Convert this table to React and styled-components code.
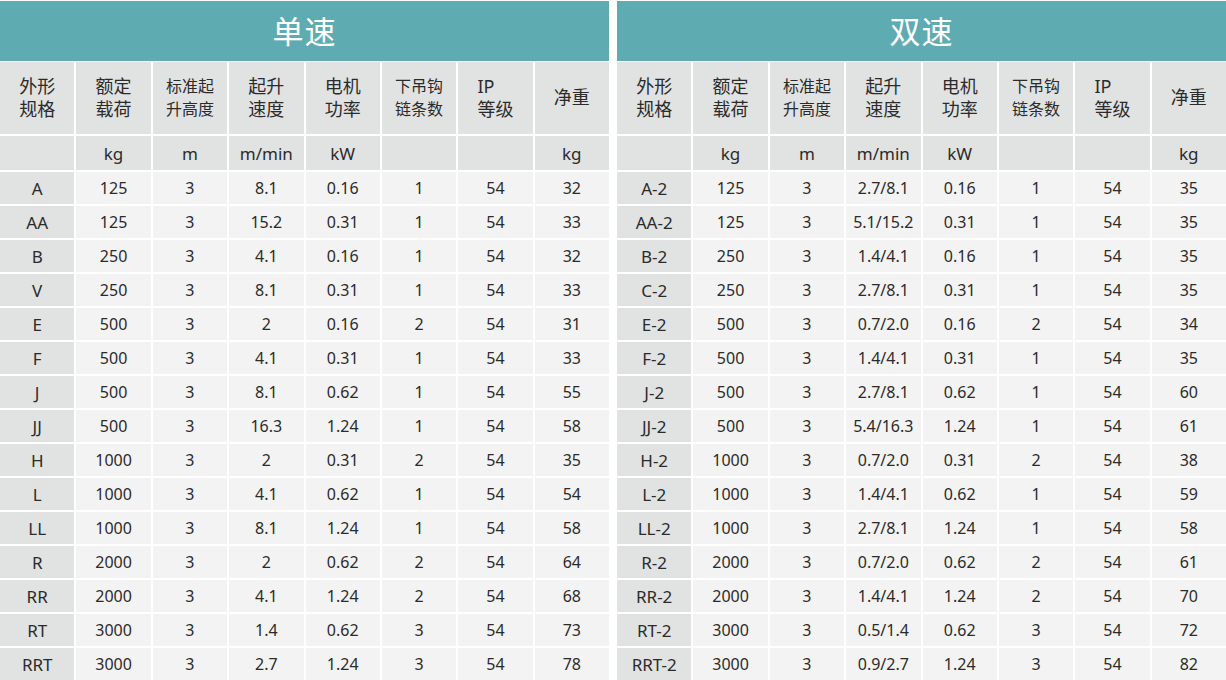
import { styled, createGlobalStyle } from "styled-components";

const GlobalStyle = createGlobalStyle`
    html, body {
        margin: 0;
        padding: 0;
        background: #fff;
    }
    body {
        font-family: "Noto Sans", "Noto Sans CJK SC", sans-serif;
        color: #2b2b2b;
    }
`;

const headers = [
    { lines: ["外形", "规格"] },
    { lines: ["额定", "载荷"] },
    { lines: ["标准起", "升高度"], small: true },
    { lines: ["起升", "速度"] },
    { lines: ["电机", "功率"] },
    { lines: ["下吊钩", "链条数"], small: true },
    { lines: ["IP", "等级"], left: true },
    { lines: ["净重"] },
];

const units = ["", "kg", "m", "m/min", "kW", "", "", "kg"];

const singleRows = [
    ["A", "125", "3", "8.1", "0.16", "1", "54", "32"],
    ["AA", "125", "3", "15.2", "0.31", "1", "54", "33"],
    ["B", "250", "3", "4.1", "0.16", "1", "54", "32"],
    ["V", "250", "3", "8.1", "0.31", "1", "54", "33"],
    ["E", "500", "3", "2", "0.16", "2", "54", "31"],
    ["F", "500", "3", "4.1", "0.31", "1", "54", "33"],
    ["J", "500", "3", "8.1", "0.62", "1", "54", "55"],
    ["JJ", "500", "3", "16.3", "1.24", "1", "54", "58"],
    ["H", "1000", "3", "2", "0.31", "2", "54", "35"],
    ["L", "1000", "3", "4.1", "0.62", "1", "54", "54"],
    ["LL", "1000", "3", "8.1", "1.24", "1", "54", "58"],
    ["R", "2000", "3", "2", "0.62", "2", "54", "64"],
    ["RR", "2000", "3", "4.1", "1.24", "2", "54", "68"],
    ["RT", "3000", "3", "1.4", "0.62", "3", "54", "73"],
    ["RRT", "3000", "3", "2.7", "1.24", "3", "54", "78"],
];

const doubleRows = [
    ["A-2", "125", "3", "2.7/8.1", "0.16", "1", "54", "35"],
    ["AA-2", "125", "3", "5.1/15.2", "0.31", "1", "54", "35"],
    ["B-2", "250", "3", "1.4/4.1", "0.16", "1", "54", "35"],
    ["C-2", "250", "3", "2.7/8.1", "0.31", "1", "54", "35"],
    ["E-2", "500", "3", "0.7/2.0", "0.16", "2", "54", "34"],
    ["F-2", "500", "3", "1.4/4.1", "0.31", "1", "54", "35"],
    ["J-2", "500", "3", "2.7/8.1", "0.62", "1", "54", "60"],
    ["JJ-2", "500", "3", "5.4/16.3", "1.24", "1", "54", "61"],
    ["H-2", "1000", "3", "0.7/2.0", "0.31", "2", "54", "38"],
    ["L-2", "1000", "3", "1.4/4.1", "0.62", "1", "54", "59"],
    ["LL-2", "1000", "3", "2.7/8.1", "1.24", "1", "54", "58"],
    ["R-2", "2000", "3", "0.7/2.0", "0.62", "2", "54", "61"],
    ["RR-2", "2000", "3", "1.4/4.1", "1.24", "2", "54", "70"],
    ["RT-2", "3000", "3", "0.5/1.4", "0.62", "3", "54", "72"],
    ["RRT-2", "3000", "3", "0.9/2.7", "1.24", "3", "54", "82"],
];

const SpecTable = ({ title, rows }) => (
    <Panel>
        <Title>{title}</Title>
        <Grid $rows={rows.length}>
            {headers.map((h, i) => (
                <HeadCell key={`h${i}`}>
                    <HeadText $small={h.small} $left={h.left}>
                        {h.lines.map((line) => (
                            <HeadLine key={line}>{line}</HeadLine>
                        ))}
                    </HeadText>
                </HeadCell>
            ))}
            {units.map((u, i) => (
                <UnitCell key={`u${i}`}>{u}</UnitCell>
            ))}
            {rows.map((row) =>
                row.map((value, i) => (
                    <DataCell key={`${row[0]}-${i}`} $model={i === 0}>
                        {value}
                    </DataCell>
                ))
            )}
        </Grid>
    </Panel>
);

const App = () => {
    return (
        <>
            <GlobalStyle />
            <Page>
                <SpecTable title="单速" rows={singleRows} />
                <SpecTable title="双速" rows={doubleRows} />
            </Page>
        </>
    );
};

const Page = styled.div`
    display: grid;
    grid-template-columns: 609px 609px;
    column-gap: 8px;
    width: 1226px;
    padding-top: 1px;
`;

const Panel = styled.section`
    display: flex;
    flex-direction: column;
`;

const Title = styled.div`
    height: 60px;
    box-sizing: border-box;
    padding-bottom: 3px;
    background: #5eacb1;
    color: #fff;
    font-family: "Noto Sans CJK SC", sans-serif;
    font-size: 31px;
    display: flex;
    align-items: center;
    justify-content: center;
    letter-spacing: 1px;
`;

const Grid = styled.div`
    margin-top: 1px;
    display: grid;
    grid-template-columns: repeat(8, 1fr);
    grid-template-rows: 72px 34px repeat(${(p) => p.$rows}, 32px);
    gap: 2px;
`;

const Cell = styled.div`
    display: flex;
    align-items: center;
    justify-content: center;
    white-space: nowrap;
`;

const HeadCell = styled(Cell)`
    background: #e1e2e2;
`;

const HeadText = styled.div`
    display: flex;
    flex-direction: column;
    gap: 1px;
    align-items: ${(p) => (p.$left ? "flex-start" : "center")};
    font-size: ${(p) => (p.$small ? "16px" : "18px")};
    margin-top: -2px;
`;

const HeadLine = styled.span`
    line-height: 22px;
`;

const UnitCell = styled(Cell)`
    background: #e1e2e2;
    font-size: 17px;
`;

const DataCell = styled(Cell)`
    background: ${(p) => (p.$model ? "#e1e2e2" : "#f3f3f3")};
    font-size: ${(p) => (p.$model ? "17px" : "16px")};
`;

export default App;
